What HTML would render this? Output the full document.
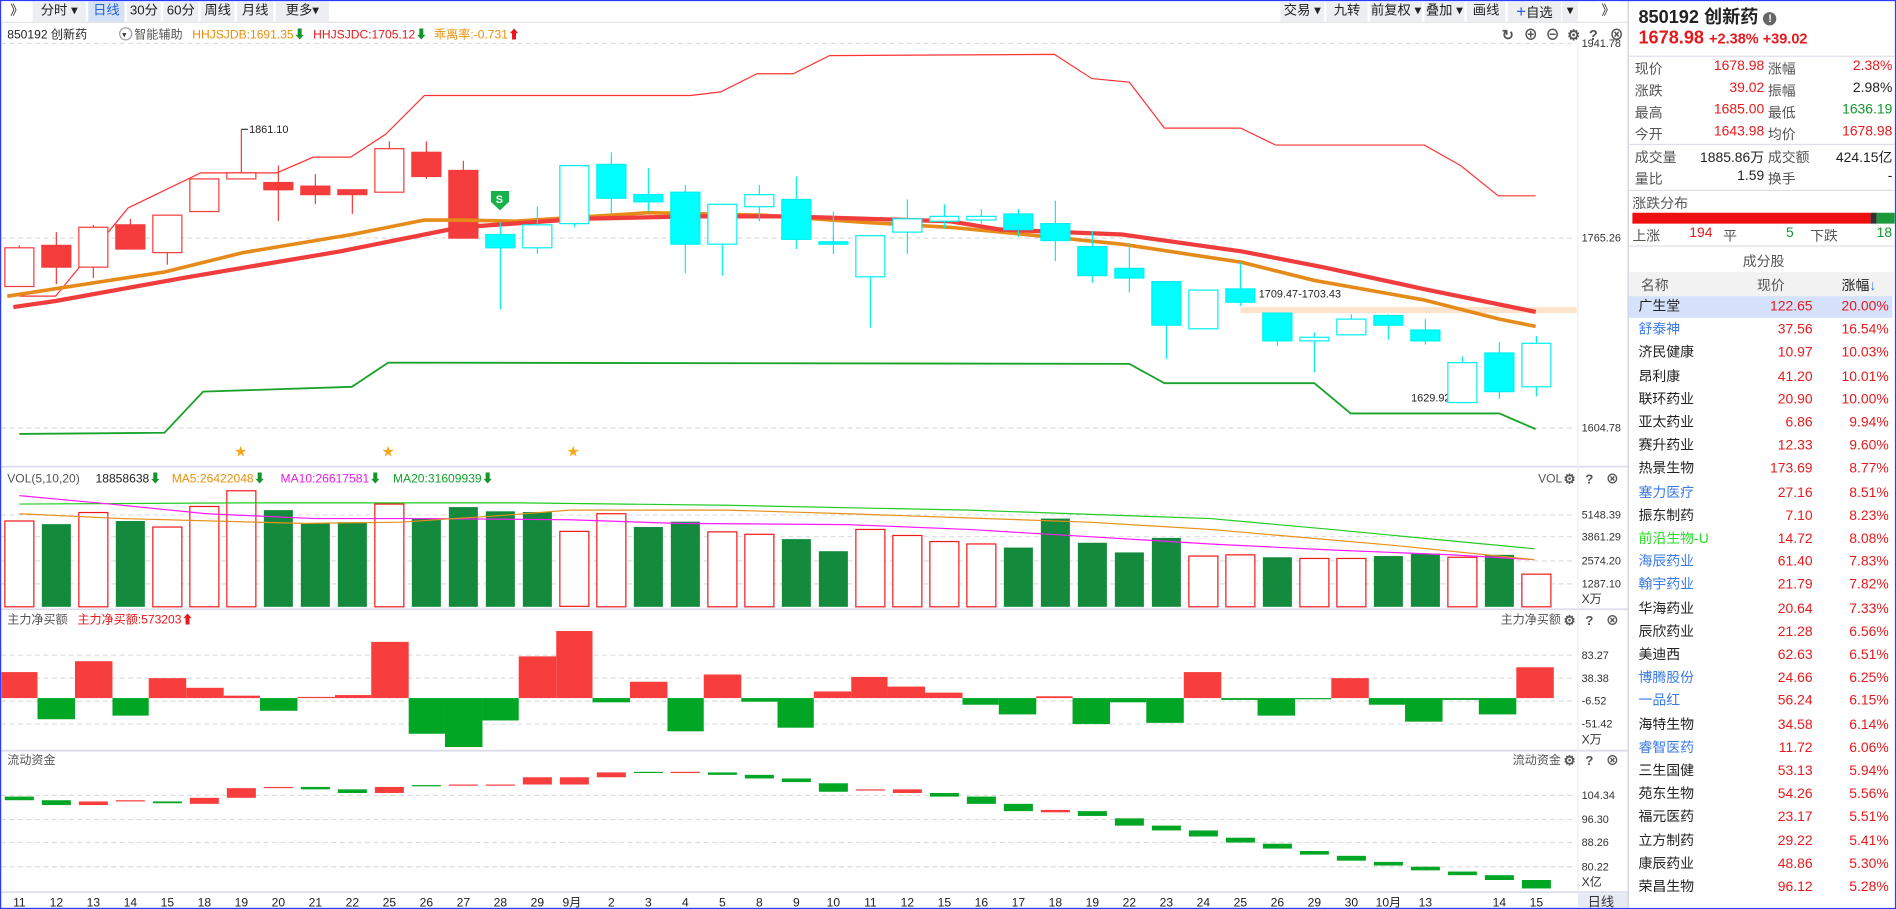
<!DOCTYPE html>
<html><head><meta charset="utf-8">
<style>
*{margin:0;padding:0;box-sizing:border-box}
html,body{width:1896px;height:909px;overflow:hidden;background:#fff}
#w{position:absolute;left:0;top:0;width:1568px;height:752px;transform:scale(1.20918,1.2088);transform-origin:0 0;font-family:"Liberation Sans","Noto Sans CJK SC",sans-serif;color:#222;border:1px solid #2a3cff;overflow:hidden}
.tb{position:absolute;top:0;height:17px;font-size:11px;line-height:17px;text-align:center;background:#eceef1;color:#222}
.sel{background:#d5e1f5;color:#2563d8}
#rp{position:absolute;left:1345px;top:0;width:223px;height:752px;border-left:1px solid #ccd;background:#fff}
.r{position:absolute;font-size:11.5px;white-space:nowrap}
.red{color:#e8191c}.grn{color:#12962c}.blu{color:#3b7be6}.lg{color:#555}
.hl{position:absolute;left:0;width:223px;height:1px;background:#dde}
.v1{left:30px;width:82px;text-align:right}
.l2{left:115px}
.v2{left:150px;width:68px;text-align:right}
</style></head><body>
<div id="w">
<div style="position:absolute;left:0;top:0;width:1345px;height:18px;background:#fff;border-bottom:1px solid #e4e4e4"></div>
<div class="tb" style="left:2px;width:22px;background:#fff">》</div>
<div class="tb" style="left:26px;width:44px">分时 ▾</div>
<div class="tb sel" style="left:72px;width:30px">日线</div>
<div class="tb" style="left:104px;width:28px">30分</div>
<div class="tb" style="left:134px;width:29px">60分</div>
<div class="tb" style="left:165px;width:28px">周线</div>
<div class="tb" style="left:195px;width:30px">月线</div>
<div class="tb" style="left:227px;width:44px">更多▾</div>
<div class="tb" style="left:1058px;width:36px">交易 ▾</div>
<div class="tb" style="left:1096px;width:34px">九转</div>
<div class="tb" style="left:1132px;width:43px">前复权 ▾</div>
<div class="tb" style="left:1177px;width:33px">叠加 ▾</div>
<div class="tb" style="left:1212px;width:32px">画线</div>
<div class="tb" style="left:1246px;width:44px"><span style="color:#2563d8;font-size:14px">+</span>自选</div>
<div class="tb" style="left:1291px;width:13px">▾</div>
<div class="tb" style="left:1320px;width:18px;background:#fff">》</div>

<svg style="position:absolute;left:0;top:0" width="1345" height="752" font-family="Liberation Sans,Noto Sans CJK SC,sans-serif">
<g stroke="#ddd" stroke-dasharray="4,3" stroke-width="1">
<line x1="0" y1="35" x2="1300" y2="35"/><line x1="0" y1="196" x2="1300" y2="196"/><line x1="0" y1="353" x2="1300" y2="353"/>
<line x1="0" y1="425" x2="1300" y2="425"/><line x1="0" y1="443" x2="1300" y2="443"/><line x1="0" y1="463" x2="1300" y2="463"/><line x1="0" y1="482" x2="1300" y2="482"/>
<line x1="0" y1="541" x2="1300" y2="541"/><line x1="0" y1="560" x2="1300" y2="560"/><line x1="0" y1="579" x2="1300" y2="579"/><line x1="0" y1="598" x2="1300" y2="598"/>
<line x1="0" y1="657" x2="1300" y2="657"/><line x1="0" y1="677" x2="1300" y2="677"/><line x1="0" y1="696" x2="1300" y2="696"/><line x1="0" y1="716" x2="1300" y2="716"/>
</g>
<g stroke="#dde" stroke-width="1.5">
<line x1="0" y1="385" x2="1345" y2="385"/><line x1="0" y1="503" x2="1345" y2="503"/><line x1="0" y1="620" x2="1345" y2="620"/><line x1="0" y1="737" x2="1345" y2="737"/>
</g>
<line x1="1304" y1="35" x2="1304" y2="737" stroke="#eee"/>
<rect x="1304" y="738" width="41" height="14" fill="#e6eaf2"/>
<text x="1312" y="749" font-size="11" fill="#333">日线</text>

<g font-size="10">
<text x="5" y="31" fill="#222">850192 创新药</text>
<circle cx="103" cy="27" r="5" fill="#fff" stroke="#99a"/><text x="100" y="30" font-size="7" fill="#333">▾</text>
<text x="110" y="31" fill="#555">智能辅助</text>
<text x="158" y="31" fill="#e8900a">HHJSJDB:1691.35<tspan fill="#12962c">⬇</tspan></text>
<text x="258" y="31" fill="#e8191c">HHJSJDC:1705.12<tspan fill="#12962c">⬇</tspan></text>
<text x="358" y="31" fill="#e8900a">乖离率:-0.731<tspan fill="#e8191c">⬆</tspan></text>
</g>
<g font-size="12" fill="#555" font-weight="bold">
<text x="1241" y="32">↻</text><text x="1259" y="32">⊕</text><text x="1277" y="32">⊖</text><text x="1295" y="32">⚙</text><text x="1313" y="32">?</text><text x="1330" y="32">⊗</text>
</g>
<g font-size="9" fill="#333">
<text x="1307" y="38">1941.78</text><text x="1307" y="199">1765.26</text><text x="1307" y="356">1604.78</text>
<text x="1307" y="428">5148.39</text><text x="1307" y="446">3861.29</text><text x="1307" y="466">2574.20</text><text x="1307" y="485">1287.10</text><text x="1307" y="498" font-size="10">X万</text>
<text x="1307" y="544">83.27</text><text x="1307" y="563">38.38</text><text x="1307" y="582">-6.52</text><text x="1307" y="601">-51.42</text><text x="1307" y="614" font-size="10">X万</text>
<text x="1307" y="660">104.34</text><text x="1307" y="680">96.30</text><text x="1307" y="699">88.26</text><text x="1307" y="719">80.22</text><text x="1307" y="732" font-size="10">X亿</text>
</g>

<rect x="1025" y="253" width="278" height="5" fill="#fde3cc"/>
<polyline fill="none" stroke="#f33" stroke-width="1" points="15,244 45,244 105,171 165,142 228,142 258,129 289,129 318,110 350,78 570,78 595,75 625,60 655,60 685,45 871,44 902,64 933,67 962,105 1025,105 1054,119 1177,119 1207,136 1238,161 1269,161"/>
<polyline fill="none" stroke="#1aa32a" stroke-width="1.5" points="15,358 135,357 167,323 290,319 320,299 933,300 962,316 1086,316 1116,341 1239,341 1269,354"/>
<line x1="198.6" y1="142" x2="198.6" y2="106" stroke="#f33"/><line x1="198.6" y1="106" x2="204" y2="106" stroke="#333"/>
<text x="205" y="109" font-size="9" fill="#222">1861.10</text>
<text x="1040" y="245" font-size="9" fill="#222">1709.47-1703.43</text>
<text x="1166" y="331" font-size="9" fill="#222">1629.92</text>

<g stroke-width="1">
<g stroke="#f53c3c">
<line x1="15" y1="202" x2="15" y2="236"/><rect x="3" y="204" width="24" height="32" fill="#fff"/>
<line x1="45.6" y1="191" x2="45.6" y2="234"/><rect x="33.6" y="202" width="24" height="18" fill="#f53c3c"/>
<line x1="76.2" y1="185" x2="76.2" y2="229"/><rect x="64.2" y="187" width="24" height="33" fill="#fff"/>
<line x1="106.8" y1="180" x2="106.8" y2="205"/><rect x="94.8" y="185" width="24" height="20" fill="#f53c3c"/>
<line x1="137.4" y1="177" x2="137.4" y2="218"/><rect x="125.4" y="177" width="24" height="31" fill="#fff"/>
<rect x="156" y="147" width="24" height="27" fill="#fff"/>
<rect x="186.6" y="142" width="24" height="5" fill="#fff"/>
<line x1="229.2" y1="136" x2="229.2" y2="182"/><rect x="217.2" y="150" width="24" height="6" fill="#f53c3c"/>
<line x1="259.8" y1="143" x2="259.8" y2="168"/><rect x="247.8" y="153" width="24" height="7" fill="#f53c3c"/>
<line x1="290.4" y1="156" x2="290.4" y2="176"/><rect x="278.4" y="156" width="24" height="4" fill="#f53c3c"/>
<line x1="321" y1="116" x2="321" y2="158"/><rect x="309" y="122" width="24" height="36" fill="#fff"/>
<line x1="351.6" y1="116" x2="351.6" y2="147"/><rect x="339.6" y="125" width="24" height="20" fill="#f53c3c"/>
<line x1="382.2" y1="132" x2="382.2" y2="196"/><rect x="370.2" y="140" width="24" height="56" fill="#f53c3c"/>
</g>
</g>
<polyline fill="none" stroke="#e68a1a" stroke-width="3" stroke-linejoin="round" points="5,244 135,224 200,208 290,193 350,181 380,181 425,182 535,175 630,177 715,183 784,187 827,191 927,201 1026,216 1086,231 1176,247 1239,263 1269,269"/>
<polyline fill="none" stroke="#f03c3c" stroke-width="3.5" stroke-linejoin="round" points="10,253 45,248 150,229 280,207 380,187 480,180 570,178 650,178 784,182 827,189 927,193 1026,207 1093,220 1176,238 1269,257"/>
<g stroke="#00f0f0" stroke-width="1">
<line x1="412.8" y1="183" x2="412.8" y2="255"/><rect x="400.8" y="193" width="24" height="11" fill="#0ff"/>
<line x1="443.4" y1="170" x2="443.4" y2="209"/><rect x="431.4" y="185" width="24" height="19" fill="#fff"/>
<line x1="474" y1="136" x2="474" y2="187"/><rect x="462" y="136" width="24" height="48" fill="#fff"/>
<line x1="504.6" y1="125" x2="504.6" y2="176"/><rect x="492.6" y="135" width="24" height="28" fill="#0ff"/>
<line x1="535.2" y1="138" x2="535.2" y2="174"/><rect x="523.2" y="160" width="24" height="6" fill="#0ff"/>
<line x1="565.8" y1="152" x2="565.8" y2="225"/><rect x="553.8" y="158" width="24" height="43" fill="#0ff"/>
<line x1="596.4" y1="201" x2="596.4" y2="227"/><rect x="584.4" y="168" width="24" height="33" fill="#fff"/>
<line x1="627" y1="152" x2="627" y2="182"/><rect x="615" y="160" width="24" height="10" fill="#fff"/>
<line x1="657.6" y1="145" x2="657.6" y2="205"/><rect x="645.6" y="164" width="24" height="33" fill="#0ff"/>
<line x1="688.2" y1="174" x2="688.2" y2="209"/><rect x="676.2" y="199" width="24" height="2" fill="#0ff"/>
<line x1="718.8" y1="228" x2="718.8" y2="270"/><rect x="706.8" y="194" width="24" height="34" fill="#fff"/>
<line x1="749.4" y1="164" x2="749.4" y2="209"/><rect x="737.4" y="180" width="24" height="11" fill="#fff"/>
<line x1="780" y1="168" x2="780" y2="188"/><rect x="768" y="178" width="24" height="4" fill="#fff"/>
<line x1="810.6" y1="172" x2="810.6" y2="184"/><rect x="798.6" y="178" width="24" height="3" fill="#fff"/>
<line x1="841.2" y1="172" x2="841.2" y2="195"/><rect x="829.2" y="176" width="24" height="13" fill="#0ff"/>
<line x1="871.8" y1="165" x2="871.8" y2="215"/><rect x="859.8" y="184" width="24" height="14" fill="#0ff"/>
<line x1="902.4" y1="190" x2="902.4" y2="233"/><rect x="890.4" y="203" width="24" height="24" fill="#0ff"/>
<line x1="933" y1="200" x2="933" y2="241"/><rect x="921" y="221" width="24" height="8" fill="#0ff"/>
<line x1="963.6" y1="232" x2="963.6" y2="296"/><rect x="951.6" y="232" width="24" height="36" fill="#0ff"/>
<rect x="982.2" y="239" width="24" height="32" fill="#fff"/>
<line x1="1024.8" y1="216" x2="1024.8" y2="252"/><rect x="1012.8" y="238" width="24" height="11" fill="#0ff"/>
<line x1="1055.4" y1="258" x2="1055.4" y2="285"/><rect x="1043.4" y="258" width="24" height="23" fill="#0ff"/>
<line x1="1086" y1="274" x2="1086" y2="307"/><rect x="1074" y="278" width="24" height="3" fill="#fff"/>
<line x1="1116.6" y1="259" x2="1116.6" y2="276"/><rect x="1104.6" y="263" width="24" height="13" fill="#fff"/>
<line x1="1147.2" y1="259" x2="1147.2" y2="280"/><rect x="1135.2" y="260" width="24" height="8" fill="#0ff"/>
<line x1="1177.8" y1="263" x2="1177.8" y2="284"/><rect x="1165.8" y="272" width="24" height="9" fill="#0ff"/>
<line x1="1208.4" y1="294" x2="1208.4" y2="299"/><rect x="1196.4" y="299" width="24" height="33" fill="#fff"/>
<line x1="1239" y1="282" x2="1239" y2="329"/><rect x="1227" y="291" width="24" height="32" fill="#0ff"/>
<line x1="1269.6" y1="277" x2="1269.6" y2="327"/><rect x="1257.6" y="283" width="24" height="36" fill="#fff"/>
</g>
<path d="M405,157 h15 v9 l-7.5,7 l-7.5,-7z" fill="#17b34a"/>
<text x="409" y="167" font-size="9" fill="#fff" font-weight="bold">S</text>
<g fill="#f2a81a" font-size="10"><text x="193" y="376">★</text><text x="315" y="376">★</text><text x="468" y="376">★</text></g>

<g font-size="10">
<text x="5" y="398" fill="#555">VOL(5,10,20)</text>
<text x="78" y="398" fill="#222">18858638<tspan fill="#12962c">⬇</tspan></text>
<text x="141" y="398" fill="#e8900a">MA5:26422048<tspan fill="#12962c">⬇</tspan></text>
<text x="231" y="398" fill="#e81ce8">MA10:26617581<tspan fill="#12962c">⬇</tspan></text>
<text x="324" y="398" fill="#12a02c">MA20:31609939<tspan fill="#12962c">⬇</tspan></text>
<text x="1271" y="398" fill="#555">VOL</text>
<text x="1240" y="515" fill="#555">主力净买额</text>
<text x="5" y="515" fill="#555">主力净买额</text>
<text x="63" y="515" fill="#e8191c">主力净买额:573203<tspan>⬆</tspan></text>
<text x="5" y="631" fill="#555">流动资金</text>
<text x="1250" y="631" fill="#555">流动资金</text>
</g>
<g font-size="11" fill="#555" font-weight="bold">
<text x="1292" y="399">⚙</text><text x="1310" y="399">?</text><text x="1327" y="399">⊗</text>
<text x="1292" y="516">⚙</text><text x="1310" y="516">?</text><text x="1327" y="516">⊗</text>
<text x="1292" y="632">⚙</text><text x="1310" y="632">?</text><text x="1327" y="632">⊗</text>
</g>
<g stroke-width="1">
<g fill="#fff" stroke="#f0191c">
<rect x="3" y="430" width="24" height="71"/><rect x="64.2" y="423" width="24" height="78"/><rect x="125.4" y="435" width="24" height="66"/><rect x="156" y="418" width="24" height="83"/><rect x="186.6" y="405" width="24" height="96"/><rect x="309" y="416" width="24" height="85"/><rect x="462" y="438.6" width="24" height="62"/><rect x="492.6" y="424" width="24" height="77"/><rect x="584.4" y="439" width="24" height="62"/><rect x="615" y="441" width="24" height="60"/><rect x="706.8" y="437" width="24" height="64"/><rect x="737.4" y="442" width="24" height="59"/><rect x="768" y="447" width="24" height="54"/><rect x="798.6" y="449" width="24" height="52"/><rect x="982.2" y="459" width="24" height="42"/><rect x="1012.8" y="458" width="24" height="43"/><rect x="1074" y="461" width="24" height="40"/><rect x="1104.6" y="461" width="24" height="40"/><rect x="1196.4" y="460" width="24" height="41"/><rect x="1257.6" y="474" width="24" height="27"/>
</g>
<g fill="#138a3c">
<rect x="33.6" y="432.6" width="24" height="68.4"/><rect x="94.8" y="430" width="24" height="71"/><rect x="217.2" y="421" width="24" height="80"/><rect x="247.8" y="432" width="24" height="69"/><rect x="278.4" y="431" width="24" height="70"/><rect x="339.6" y="428" width="24" height="73"/><rect x="370.2" y="418.5" width="24" height="82.5"/><rect x="400.8" y="422" width="24" height="79"/><rect x="523.2" y="435" width="24" height="66"/><rect x="553.8" y="430.6" width="24" height="70.4"/><rect x="645.6" y="445" width="24" height="56"/><rect x="676.2" y="455" width="24" height="46"/><rect x="829.2" y="452" width="24" height="49"/><rect x="859.8" y="428" width="24" height="73"/><rect x="890.4" y="448" width="24" height="53"/><rect x="921" y="456" width="24" height="45"/><rect x="951.6" y="444" width="24" height="57"/><rect x="1043.4" y="460" width="24" height="41"/><rect x="1135.2" y="459" width="24" height="42"/><rect x="1165.8" y="457" width="24" height="44"/><rect x="1227" y="458" width="24" height="43"/>
<rect x="431.4" y="422.6" width="24" height="78.4"/>
</g>
</g>
<polyline fill="none" stroke="#22cc22" stroke-width="1" points="15,416 200,415 430,415 600,417 800,421 1000,428 1100,437 1268,453"/>
<polyline fill="none" stroke="#ff1aff" stroke-width="1" points="15,409 90,416 170,424 260,428 350,428 470,429 560,432 700,433 800,437 900,443 1000,449 1100,454 1200,458 1268,462"/>
<polyline fill="none" stroke="#e8901a" stroke-width="1" points="15,424 100,428 250,432 330,431 420,425 470,421 600,421 700,424 900,431 1000,437 1150,450 1268,462"/>

<g fill="#f83d3d">
<rect x="0" y="555" width="30" height="21.5"/><rect x="61" y="546" width="31" height="30.5"/><rect x="122" y="560" width="31" height="16.5"/><rect x="153" y="568" width="31" height="8.5"/><rect x="184" y="574.5" width="30" height="2"/><rect x="245" y="575.5" width="31" height="1"/><rect x="276" y="574" width="30" height="2.5"/><rect x="306" y="530" width="31" height="46.5"/><rect x="428" y="542" width="31" height="34.5"/><rect x="459" y="521" width="30" height="55.5"/><rect x="520" y="563" width="31" height="13.5"/><rect x="581" y="557" width="31" height="19.5"/>
<rect x="672" y="571" width="31" height="5.5"/><rect x="703" y="559" width="30" height="17.5"/><rect x="733" y="567" width="31" height="9.5"/><rect x="764" y="572" width="31" height="4.5"/><rect x="856" y="575" width="30" height="1.5"/><rect x="978" y="555" width="31" height="21.5"/><rect x="1100" y="560" width="31" height="16.5"/><rect x="1253" y="551" width="31" height="25.5"/>
</g>
<g fill="#00a624">
<rect x="30" y="576.5" width="31" height="17.5"/><rect x="92" y="576.5" width="30" height="14.5"/><rect x="214" y="576.5" width="31" height="10.5"/><rect x="337" y="576.5" width="30" height="29.5"/><rect x="367" y="576.5" width="31" height="40.5"/><rect x="398" y="576.5" width="30" height="18.5"/><rect x="489" y="576.5" width="31" height="3.5"/><rect x="551" y="576.5" width="30" height="27.5"/><rect x="612" y="576.5" width="30" height="3"/><rect x="642" y="576.5" width="30" height="24.5"/>
<rect x="795" y="576.5" width="30" height="5.5"/><rect x="825" y="576.5" width="31" height="13.5"/><rect x="886" y="576.5" width="31" height="21.5"/><rect x="917" y="576.5" width="30" height="3.5"/><rect x="947" y="576.5" width="31" height="20.5"/><rect x="1009" y="576.5" width="30" height="1.5"/><rect x="1039" y="576.5" width="31" height="14.5"/><rect x="1070" y="576.5" width="30" height="1"/><rect x="1131" y="576.5" width="30" height="5.5"/><rect x="1161" y="576.5" width="31" height="19.5"/><rect x="1192" y="576.5" width="30" height="1.5"/><rect x="1222" y="576.5" width="31" height="13.5"/>
</g>

<g fill="#00a624">
<rect x="3" y="658" width="24" height="3"/><rect x="33.6" y="661" width="24" height="4"/><rect x="125.4" y="662" width="24" height="1.5"/><rect x="247.8" y="650" width="24" height="2"/><rect x="278.4" y="652" width="24" height="3"/><rect x="339.6" y="648.5" width="24" height="1"/><rect x="523.2" y="637.5" width="24" height="1"/><rect x="584.4" y="638" width="24" height="2"/><rect x="615" y="640" width="24" height="3"/><rect x="645.6" y="643" width="24" height="3"/><rect x="676.2" y="647" width="24" height="7"/><rect x="768" y="655" width="24" height="3"/><rect x="798.6" y="658" width="24" height="6"/><rect x="829.2" y="664" width="24" height="6"/><rect x="890.4" y="670" width="24" height="4"/><rect x="921" y="676" width="24" height="6"/><rect x="951.6" y="682" width="24" height="4"/><rect x="982.2" y="686" width="24" height="5"/><rect x="1012.8" y="692" width="24" height="4"/><rect x="1043.4" y="697" width="24" height="4"/><rect x="1074" y="703" width="24" height="3"/><rect x="1104.6" y="707" width="24" height="4"/><rect x="1135.2" y="712" width="24" height="3"/><rect x="1165.8" y="716" width="24" height="3"/><rect x="1196.4" y="720" width="24" height="3"/><rect x="1227" y="723" width="24" height="4"/><rect x="1257.6" y="727" width="24" height="7"/>
</g>
<g fill="#f83d3d">
<rect x="64.2" y="662" width="24" height="3"/><rect x="94.8" y="661" width="24" height="1"/><rect x="156" y="659" width="24" height="5"/><rect x="186.6" y="651" width="24" height="8"/><rect x="217.2" y="650" width="24" height="1"/><rect x="309" y="650" width="24" height="5"/><rect x="370.2" y="648" width="24" height="1"/><rect x="400.8" y="648" width="24" height="1"/><rect x="431.4" y="642" width="24" height="6"/><rect x="462" y="642" width="24" height="6"/><rect x="492.6" y="638" width="24" height="4"/><rect x="553.8" y="637.5" width="24" height="1"/><rect x="706.8" y="652" width="24" height="1"/><rect x="737.4" y="652" width="24" height="3"/><rect x="859.8" y="669" width="24" height="2"/>
</g>

<g font-size="10" fill="#222" text-anchor="middle">
<text x="15" y="749">11</text><text x="45.6" y="749">12</text><text x="76.2" y="749">13</text><text x="106.8" y="749">14</text><text x="137.4" y="749">15</text><text x="168" y="749">18</text><text x="198.6" y="749">19</text><text x="229.2" y="749">20</text><text x="259.8" y="749">21</text><text x="290.4" y="749">22</text><text x="321" y="749">25</text><text x="351.6" y="749">26</text><text x="382.2" y="749">27</text><text x="412.8" y="749">28</text><text x="443.4" y="749">29</text><text x="472" y="749">9月</text><text x="504.6" y="749">2</text><text x="535.2" y="749">3</text><text x="565.8" y="749">4</text><text x="596.4" y="749">5</text><text x="627" y="749">8</text><text x="657.6" y="749">9</text><text x="688.2" y="749">10</text><text x="718.8" y="749">11</text><text x="749.4" y="749">12</text><text x="780" y="749">15</text><text x="810.6" y="749">16</text><text x="841.2" y="749">17</text><text x="871.8" y="749">18</text><text x="902.4" y="749">19</text><text x="933" y="749">22</text><text x="963.6" y="749">23</text><text x="994.2" y="749">24</text><text x="1024.8" y="749">25</text><text x="1055.4" y="749">26</text><text x="1086" y="749">29</text><text x="1116.6" y="749">30</text><text x="1147.2" y="749">10月</text><text x="1177.8" y="749">13</text><text x="1239" y="749">14</text><text x="1269.6" y="749">15</text>
</g>
</svg>

<div id="rp">
<div class="r" style="left:8px;top:2px;font-size:15px;font-weight:bold;color:#222">850192 创新药 <span style="display:inline-block;width:11px;height:11px;border-radius:6px;background:#666;color:#fff;font-size:9px;line-height:11px;text-align:center;vertical-align:1px">!</span></div>
<div class="r red" style="left:8px;top:22px;font-size:15px;font-weight:bold">1678.98 <span style="font-size:12px">+2.38% +39.02</span></div>
<div class="hl" style="top:45px"></div>
<div class="r lg" style="left:5px;top:48px">现价</div><div class="r red v1" style="top:48px">1678.98</div><div class="r lg l2" style="top:48px">涨幅</div><div class="r red v2" style="top:48px">2.38%</div>
<div class="r lg" style="left:5px;top:66px">涨跌</div><div class="r red v1" style="top:66px">39.02</div><div class="r lg l2" style="top:66px">振幅</div><div class="r v2" style="top:66px">2.98%</div>
<div class="r lg" style="left:5px;top:84px">最高</div><div class="r red v1" style="top:84px">1685.00</div><div class="r lg l2" style="top:84px">最低</div><div class="r grn v2" style="top:84px">1636.19</div>
<div class="r lg" style="left:5px;top:102px">今开</div><div class="r red v1" style="top:102px">1643.98</div><div class="r lg l2" style="top:102px">均价</div><div class="r red v2" style="top:102px">1678.98</div>
<div class="hl" style="top:118px"></div>
<div class="r lg" style="left:5px;top:121px">成交量</div><div class="r v1" style="top:121px">1885.86万</div><div class="r lg l2" style="top:121px">成交额</div><div class="r v2" style="top:121px">424.15亿</div>
<div class="r lg" style="left:5px;top:139px">量比</div><div class="r v1" style="top:139px">1.59</div><div class="r lg l2" style="top:139px">换手</div><div class="r v2" style="top:139px">-</div>
<div class="hl" style="top:156px"></div>
<div class="r lg" style="left:3px;top:159px">涨跌分布</div>
<div style="position:absolute;left:3px;top:175px;width:197px;height:9px;background:#ee1010"></div>
<div style="position:absolute;left:200px;top:175px;width:5px;height:9px;background:#333"></div>
<div style="position:absolute;left:205px;top:175px;width:15px;height:9px;background:#1a9a3a"></div>
<div class="r lg" style="left:3px;top:186px">上涨</div><div class="r red" style="left:50px;top:186px">194</div><div class="r lg" style="left:78px;top:186px">平</div><div class="r grn" style="left:130px;top:186px">5</div><div class="r lg" style="left:150px;top:186px">下跌</div><div class="r grn" style="left:205px;top:186px">18</div>
<div class="hl" style="top:202px"></div>
<div class="r lg" style="left:0;top:207px;width:223px;text-align:center">成分股</div>
<div style="position:absolute;left:0;top:224px;width:223px;height:20px;background:#f2f2f2"></div>
<div class="r lg" style="left:10px;top:227px">名称</div><div class="r lg" style="left:106px;top:227px">现价</div><div class="r" style="left:176px;top:227px">涨幅<span class="blu">↓</span></div>
<div style="position:absolute;left:0;top:244px;width:218px;height:18px;background:#d6e2fb"></div>
<div style="position:absolute;left:0;top:244px;width:223px">
<div style="position:relative;font-size:11.5px;line-height:19.2px">
<div style="display:flex"><span style="width:90px;padding-left:8px">广生堂</span><span class="red" style="width:62px;text-align:right">122.65</span><span class="red" style="width:63px;text-align:right">20.00%</span></div>
<div style="display:flex"><span class="blu" style="width:90px;padding-left:8px">舒泰神</span><span class="red" style="width:62px;text-align:right">37.56</span><span class="red" style="width:63px;text-align:right">16.54%</span></div>
<div style="display:flex"><span style="width:90px;padding-left:8px">济民健康</span><span class="red" style="width:62px;text-align:right">10.97</span><span class="red" style="width:63px;text-align:right">10.03%</span></div>
<div style="display:flex"><span style="width:90px;padding-left:8px">昂利康</span><span class="red" style="width:62px;text-align:right">41.20</span><span class="red" style="width:63px;text-align:right">10.01%</span></div>
<div style="display:flex"><span style="width:90px;padding-left:8px">联环药业</span><span class="red" style="width:62px;text-align:right">20.90</span><span class="red" style="width:63px;text-align:right">10.00%</span></div>
<div style="display:flex"><span style="width:90px;padding-left:8px">亚太药业</span><span class="red" style="width:62px;text-align:right">6.86</span><span class="red" style="width:63px;text-align:right">9.94%</span></div>
<div style="display:flex"><span style="width:90px;padding-left:8px">赛升药业</span><span class="red" style="width:62px;text-align:right">12.33</span><span class="red" style="width:63px;text-align:right">9.60%</span></div>
<div style="display:flex"><span style="width:90px;padding-left:8px">热景生物</span><span class="red" style="width:62px;text-align:right">173.69</span><span class="red" style="width:63px;text-align:right">8.77%</span></div>
<div style="display:flex"><span class="blu" style="width:90px;padding-left:8px">塞力医疗</span><span class="red" style="width:62px;text-align:right">27.16</span><span class="red" style="width:63px;text-align:right">8.51%</span></div>
<div style="display:flex"><span style="width:90px;padding-left:8px">振东制药</span><span class="red" style="width:62px;text-align:right">7.10</span><span class="red" style="width:63px;text-align:right">8.23%</span></div>
<div style="display:flex"><span style="width:90px;padding-left:8px;color:#22dd22">前沿生物-U</span><span class="red" style="width:62px;text-align:right">14.72</span><span class="red" style="width:63px;text-align:right">8.08%</span></div>
<div style="display:flex"><span class="blu" style="width:90px;padding-left:8px">海辰药业</span><span class="red" style="width:62px;text-align:right">61.40</span><span class="red" style="width:63px;text-align:right">7.83%</span></div>
<div style="display:flex"><span class="blu" style="width:90px;padding-left:8px">翰宇药业</span><span class="red" style="width:62px;text-align:right">21.79</span><span class="red" style="width:63px;text-align:right">7.82%</span></div>
<div style="display:flex"><span style="width:90px;padding-left:8px">华海药业</span><span class="red" style="width:62px;text-align:right">20.64</span><span class="red" style="width:63px;text-align:right">7.33%</span></div>
<div style="display:flex"><span style="width:90px;padding-left:8px">辰欣药业</span><span class="red" style="width:62px;text-align:right">21.28</span><span class="red" style="width:63px;text-align:right">6.56%</span></div>
<div style="display:flex"><span style="width:90px;padding-left:8px">美迪西</span><span class="red" style="width:62px;text-align:right">62.63</span><span class="red" style="width:63px;text-align:right">6.51%</span></div>
<div style="display:flex"><span class="blu" style="width:90px;padding-left:8px">博腾股份</span><span class="red" style="width:62px;text-align:right">24.66</span><span class="red" style="width:63px;text-align:right">6.25%</span></div>
<div style="display:flex"><span class="blu" style="width:90px;padding-left:8px">一品红</span><span class="red" style="width:62px;text-align:right">56.24</span><span class="red" style="width:63px;text-align:right">6.15%</span></div>
<div style="display:flex"><span style="width:90px;padding-left:8px">海特生物</span><span class="red" style="width:62px;text-align:right">34.58</span><span class="red" style="width:63px;text-align:right">6.14%</span></div>
<div style="display:flex"><span class="blu" style="width:90px;padding-left:8px">睿智医药</span><span class="red" style="width:62px;text-align:right">11.72</span><span class="red" style="width:63px;text-align:right">6.06%</span></div>
<div style="display:flex"><span style="width:90px;padding-left:8px">三生国健</span><span class="red" style="width:62px;text-align:right">53.13</span><span class="red" style="width:63px;text-align:right">5.94%</span></div>
<div style="display:flex"><span style="width:90px;padding-left:8px">苑东生物</span><span class="red" style="width:62px;text-align:right">54.26</span><span class="red" style="width:63px;text-align:right">5.56%</span></div>
<div style="display:flex"><span style="width:90px;padding-left:8px">福元医药</span><span class="red" style="width:62px;text-align:right">23.17</span><span class="red" style="width:63px;text-align:right">5.51%</span></div>
<div style="display:flex"><span style="width:90px;padding-left:8px">立方制药</span><span class="red" style="width:62px;text-align:right">29.22</span><span class="red" style="width:63px;text-align:right">5.41%</span></div>
<div style="display:flex"><span style="width:90px;padding-left:8px">康辰药业</span><span class="red" style="width:62px;text-align:right">48.86</span><span class="red" style="width:63px;text-align:right">5.30%</span></div>
<div style="display:flex"><span style="width:90px;padding-left:8px">荣昌生物</span><span class="red" style="width:62px;text-align:right">96.12</span><span class="red" style="width:63px;text-align:right">5.28%</span></div>
</div></div>
<div style="position:absolute;right:0;top:0;width:1px;height:752px;background:#2a3cff"></div>
</div>
</div>
</body></html>
